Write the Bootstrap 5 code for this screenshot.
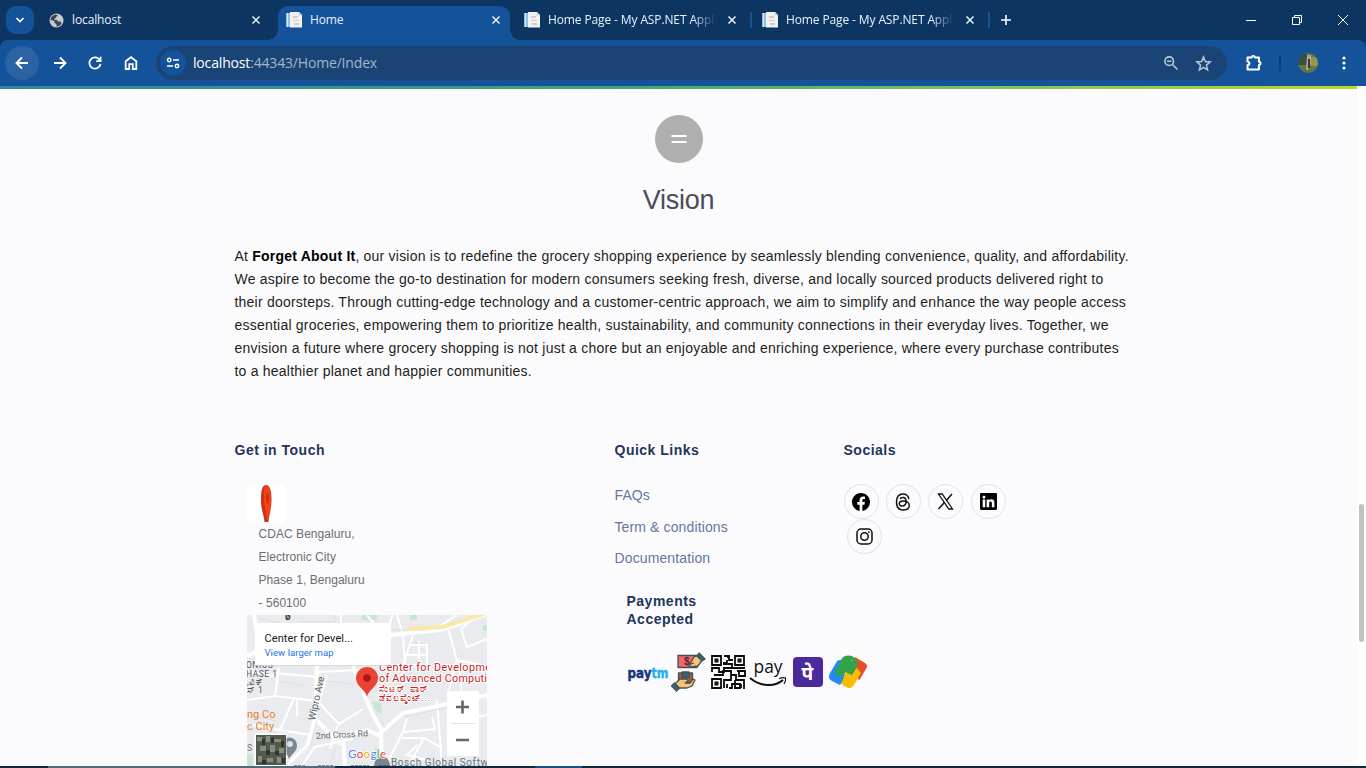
<!DOCTYPE html>
<html lang="en">
<head>
<meta charset="utf-8">
<meta name="viewport" content="width=device-width, initial-scale=1">
<title>Home</title>
<link rel="stylesheet" href="https://cdn.jsdelivr.net/npm/bootstrap@5.3.0/dist/css/bootstrap.min.css">
<style>
body{width:1366px;height:768px;font-family:"Liberation Sans",Arial,sans-serif;background:#fbfbfd;color:#212529}
svg{display:block;flex:none}
.tabstrip{height:40px;background:#0c3561;font:12px/16px "Open Sans","Noto Sans",sans-serif;letter-spacing:-.12px;color:#e9f2fc}
.tabmenu{width:28px;height:28px;margin:6px 0 0 6px;border-radius:10px;background:#14529a}
.tab-item{height:34px;margin-top:6px;width:238px;padding:0 14px 6px 10px}
.tab-item.wide{width:238px}
.tab-current{width:232px;padding-left:8px;padding-right:9px;background:#14529a;border-radius:10px 10px 0 0;position:relative}
.tab-current::before,.tab-current::after{content:"";position:absolute;bottom:0;width:10px;height:10px}
.tab-current::before{left:-10px;background:radial-gradient(circle at 0 0,transparent 9.5px,#14529a 10px)}
.tab-current::after{right:-10px;background:radial-gradient(circle at 100% 0,transparent 9.5px,#14529a 10px)}
.tab-name{flex:1;white-space:nowrap;overflow:hidden}
.tab-fade{-webkit-mask-image:linear-gradient(90deg,#000 145px,transparent 168px);mask-image:linear-gradient(90deg,#000 145px,transparent 168px)}
.tab-sep{width:2px;height:16px;margin-top:12px;background:#14529a}
.toolbar{height:46px;background:#14529a;border-radius:8px 8px 0 0;padding-left:5px}
.toolwrap{background:#0c3561}
.round-btn{width:34px;height:34px}
.round-btn.lit{background:#2b62a4;border-radius:50%}
.omnibox{width:1071px;height:34px;border-radius:17px;background:#194475;font:14px/20px "Open Sans","Noto Sans",sans-serif;letter-spacing:-.17px;color:#a3b6ca;padding:0 15px 0 4px}
.siteinfo{width:26px;height:26px;border-radius:50%;background:#14529a}
.avatar{width:20px;height:20px;border-radius:50%;overflow:hidden}
.viewport-row{height:680px}
.page{width:1357px;overflow:hidden}
.rainbow{height:3px;background:linear-gradient(90deg,#2a8a9e,#3ba678 45%,#86c35a 75%,#b8d829)}
.equals{width:48px;height:48px;margin-top:26px;border-radius:50%;background:#afafb0}
.heading{font-size:27px;line-height:32px;font-weight:400;color:#4a4c5c;margin:21px 0 0;letter-spacing:-.25px}
.vision{width:900px;margin:29px 0 0 234.5px;font-size:14px;line-height:23px;color:#1e1e20;letter-spacing:.22px;white-space:nowrap}
.vision b{color:#000}
.vision span{display:block}
.foot{display:grid;grid-template-columns:380px 229px 180px;margin:58px 0 0 234.5px}
.foot h5{font-size:14px;line-height:18px;font-weight:700;color:#23355a;letter-spacing:.5px;margin:0}
.locicon{width:38px;height:38px;margin:26px 0 0 12px;background:#fff}
.addr{font-size:12px;line-height:23px;color:#6c6d72;margin:0 0 0 24px;letter-spacing:.05px}
.mapbox{margin:0 0 0 12.5px;width:240px;height:152px}
.links a{display:block;font-size:14px;line-height:18px;color:#67779d;text-decoration:none;letter-spacing:.12px;margin-bottom:13.5px}
.links{margin-top:27px}
.pay{margin:25px 0 0 12px}
.socials{width:180px;margin-top:25px;display:flex;flex-wrap:wrap;gap:0 7.4px}
.social{width:35px;height:35px;border:1px solid #e0e1ea;border-radius:50%}
.scroller{width:9px;background:#fff;padding:417px 0 0 2px;margin-top:1px}
.thumb{width:5px;height:138px;border-radius:3px;background:#c1c1c1}
.taskbar{height:2px;background:linear-gradient(90deg,#10283f 48px,#54697c 48px,#54697c 335px,#10283f 335px,#10283f 535px,#185087 535px,#185087 582px,#10283f 582px)}
</style>
</head>
<body class="overflow-hidden">
<svg width="0" height="0" style="position:absolute" aria-hidden="true">
<defs>
<symbol id="x" viewBox="0 0 10 10"><path d="M1.5 1.5l7 7M8.5 1.5l-7 7" stroke="#e9f2fc" stroke-width="1.5"/></symbol>
<symbol id="doc" viewBox="0 0 16 16"><path d="M0 1h5v14H0z" fill="#8fc0df"/><path d="M1.5 1v14" stroke="#d5e9f6"/><path d="M4 0h9l3 3v12.500H4z" fill="#f4f2f0"/><path d="M7 4h5v2H7zM7 8h6v1H7zM8 11h5v2H8z" fill="#cfcdd0"/><path d="M12.500 0v3.500H16" fill="#d8d8da"/></symbol>
</defs>
</svg>

<header>
  <div class="tabstrip d-flex">
    <div class="tabmenu d-flex align-items-center justify-content-center"><svg width="10" height="8" viewBox="0 0 10 8"><path d="M1.500 2l3.500 3.500L8.500 2" fill="none" stroke="#fff" stroke-width="1.700"/></svg></div>
    <div class="tab-item d-flex align-items-center" style="width:244px;padding-left:15px;padding-right:17px">
      <svg class="me-2" width="15" height="15" viewBox="0 0 15 15"><circle cx="7.500" cy="7.500" r="7" fill="#c9cbce"/><path d="M7 1.500C3 2 1.500 5 1.500 7l4 1v2l2 1v2.500c2 0 4-1 5-3l-1-2H8.500V7h-3V5.500h2V4l2-1z" fill="#394554"/><path d="M9 3l-1.500 2h2l1 2 2.500.5" stroke="#c9cbce" fill="none" stroke-width="1.500"/></svg>
      <div class="tab-name">localhost</div><svg width="10" height="10"><use href="#x"/></svg>
    </div>
    <div class="tab-item tab-current d-flex align-items-center">
      <svg width="16" height="16" class="me-2"><use href="#doc"/></svg><div class="tab-name">Home</div><svg width="10" height="10"><use href="#x"/></svg>
    </div>
    <div class="tab-item d-flex align-items-center" style="width:240px;padding-left:14px;padding-right:13px">
      <svg width="16" height="16" class="me-2"><use href="#doc"/></svg><div class="tab-name tab-fade">Home Page - My ASP.NET Application</div><svg class="ms-2" width="10" height="10"><use href="#x"/></svg>
    </div>
    <div class="tab-sep"></div>
    <div class="tab-item d-flex align-items-center" style="width:236px;padding-left:10px;padding-right:13px">
      <svg width="16" height="16" class="me-2"><use href="#doc"/></svg><div class="tab-name tab-fade">Home Page - My ASP.NET Application</div><svg class="ms-2" width="10" height="10"><use href="#x"/></svg>
    </div>
    <div class="tab-sep"></div>
    <svg width="12" height="12" style="margin:14px 0 0 10px"><path d="M6 1v10M1 6h10" stroke="#fff" stroke-width="1.600"/></svg>
    <svg class="ms-auto" width="120" height="40" viewBox="1246 0 120 40" fill="none" stroke="#fff"><path d="M1246 20.500h10M1292.500 17.500h7v7h-7zM1294.500 17.500v-2h7v7h-2M1338 15l10 10M1348 15l-10 10"/></svg>
  </div>
  <div class="toolwrap">
  <div class="toolbar d-flex align-items-center">
    <div class="round-btn lit d-flex align-items-center justify-content-center"><svg width="16" height="16" viewBox="0 0 16 16" fill="none" stroke="#fff" stroke-width="1.900"><path d="M14 8H3M8 2.500L2.500 8 8 13.500"/></svg></div>
    <div class="round-btn d-flex align-items-center justify-content-center ms-1" style="margin-right:1px"><svg width="16" height="16" viewBox="0 0 16 16" fill="none" stroke="#fff" stroke-width="1.900"><path d="M2 8h11M8 2.500L13.500 8 8 13.500"/></svg></div>
    <div class="round-btn d-flex align-items-center justify-content-center" style="margin-right:2px"><svg width="16" height="16" viewBox="0 0 16 16" fill="none" stroke="#fff" stroke-width="1.800"><path d="M13 5.500A5.600 5.600 0 1 0 13.500 9M13.600 1.800v4.400H9.200"/></svg></div>
    <div class="round-btn d-flex align-items-center justify-content-center"><svg width="16" height="16" viewBox="0 0 16 16" fill="none" stroke="#fff" stroke-width="1.800"><path d="M2.700 14V6.300L8 2.200l5.300 4.100V14H9.800V9.200H6.200V14z"/></svg></div>
    <div class="omnibox d-flex align-items-center ms-2 mt-0" style="margin-right:17px">
      <div class="siteinfo d-flex align-items-center justify-content-center"><svg width="14" height="12" viewBox="0 0 14 12" fill="none" stroke="#fff" stroke-width="1.500"><circle cx="3.200" cy="3" r="1.700"/><path d="M7 3h6M1 9h6"/><circle cx="11" cy="9" r="1.700"/></svg></div>
      <div class="flex-grow-1" style="padding-left:7px"><span class="text-white">localhost</span>:44343/Home/Index</div>
      <svg width="16" height="16" viewBox="0 0 16 16" fill="none" stroke="#b9c8d9" stroke-width="1.600"><circle cx="6.200" cy="6.200" r="4.300"/><path d="M9.500 9.500l5 5M4 6.200h4.400"/></svg>
      <svg style="margin-left:16px" width="17" height="17" viewBox="0 0 17 17" fill="none" stroke="#b9c8d9" stroke-width="1.500"><path d="M8.500 2l1.800 4.500 4.900.4-3.700 3.200 1.100 4.800-4.100-2.600-4.100 2.600 1.100-4.800-3.700-3.200 4.900-.4z"/></svg>
    </div>
    <svg width="20" height="20" viewBox="0 0 20 20" fill="none" stroke="#fff" stroke-width="2"><path d="M3.500 4.500h4.200a1.500 1.500 0 0 1 3.200 0h4v4.300a1.500 1.500 0 0 1 0 3.200v4.500H3.500v-4.200c2.600-.6 2.600-3.300 0-3.900z" stroke-linejoin="round"/></svg>
    <div style="width:2px;height:16px;background:#0e3c70;margin:0 17px 0 15px"></div>
    <div class="avatar"><svg width="20" height="20"><path fill="#667746" d="M0 0h20v20H0z"/><path fill="#374f46" d="M0 0h9v12H0z"/><path fill="#92954a" d="M13 4h7v9h-7z"/><path fill="#a8aa91" d="M9 2h4v9l-3 6H8z"/><path fill="#4b3035" d="M10 6h2v9h-2z"/></svg></div>
    <svg style="margin-left:24px" width="4" height="16" fill="#fff"><circle cx="2" cy="3" r="1.600"/><circle cx="2" cy="8" r="1.600"/><circle cx="2" cy="13" r="1.600"/></svg>
  </div>
  </div>
</header>

<div class="viewport-row d-flex">
<main class="page">
  <div class="rainbow"></div>
  <section class="d-flex flex-column align-items-center text-center">
    <div class="equals d-flex align-items-center justify-content-center"><svg width="16" height="10"><path d="M.5 2h15M.5 8h15" stroke="#fff" stroke-width="2"/></svg></div>
    <h2 class="heading">Vision</h2>
  </section>
  <p class="vision"><span>At <b>Forget About It</b>, our vision is to redefine the grocery shopping experience by seamlessly blending convenience, quality, and affordability.</span><span>We aspire to become the go-to destination for modern consumers seeking fresh, diverse, and locally sourced products delivered right to</span><span>their doorsteps. Through cutting-edge technology and a customer-centric approach, we aim to simplify and enhance the way people access</span><span>essential groceries, empowering them to prioritize health, sustainability, and community connections in their everyday lives. Together, we</span><span>envision a future where grocery shopping is not just a chore but an enjoyable and enriching experience, where every purchase contributes</span><span>to a healthier planet and happier communities.</span></p>

  <footer class="foot">
    <div>
      <h5>Get in Touch</h5>
      <div class="locicon"><svg width="38" height="38"><path d="M19 0c4 0 5.500 6 5.500 14 0 10-2.500 16-3 23h-4c-.5-7-3.500-12-3.500-22C14 5 15.500 0 19 0z" fill="#c9301f"/><path d="M19 1c3.500 0 5 6 5 13s-2 14-3 21h-1c0-8-3-12-3-21 0-7 0-13 2-13z" fill="#fb4210"/><ellipse cx="20.500" cy="13" rx="1.600" ry="5.500" fill="#c5331a"/></svg></div>
      <p class="addr">CDAC Bengaluru,<br>Electronic City<br>Phase 1, Bengaluru<br>- 560100</p>
      <div class="mapbox">
      <svg width="240" height="152" viewBox="0 0 240 152" font-family="Roboto,sans-serif" overflow="hidden">
        <path fill="#e9ebee" d="M0 0h240v152H0z"/>
        <path fill="#c8e6d2" d="M115 0h16l-2 5h-15zM163 0h7v5h-7zM236 10h4v6h-4zM125 86l9 2 1 11-6-3zM128 132l8 3-2 12-7-4zM0 139l6 0v13H0z"/>
        <g fill="none" stroke="#fff" stroke-width="2">
          <path stroke-width="4" d="M7 0l5 35-12 6M70 51l-2 53-8 28-22 20M106 51l18 45 10 18 1 38M118 114l13 6 25-22 30-6 54-12M144 20l50-5 46-16M68 104l26 25M98 152l-2-32 22-4"/>
          <path d="M94 0v9M120 0l15 20 5 30M140 20l5-20M150 0l6 20 2 30M166 20l-10 30 24 0 0-23M162 30h18M160 40h20M172 26v24M185 16l25-16M200 10l10 35 30 6M210 45l-8 30M230 0l-16 14 6 18 20-8M32 53l-4 28-28 4M28 58l42 4M25 81l22 2-14 32-33-6M47 83l21 3M70 57l42-2M80 60l-8 28 20 21 24-15M91 110l-8 24M33 115l30 5M54 152l14-20 38-8M160 103l-4 14 32-3-3-12M190 85l5 67M156 117l-16 31M155 123l22 0-14 25M177 123l18 10M170 130l-10 10 20 5M215 80l-3-33M240 100l-30 6M50 83v18M5 57l24 4"/>
        </g>
        <g fill="none" stroke="#d8dbdf" stroke-width=".8"><path d="M12 3l25 6 12 12M52 7h36M88 0v9M70 105l-6 24-21 21M126 93l12 20M158 102l30-7 28-5M33 66l26 5M8 101l22 5M80 66l25 3M142 15l38 0M164 28h18M84 147l5-16"/></g>
        <path d="M160 14l36-2 44-14" fill="none" stroke="#f8e9a4" stroke-width="4"/>
        <text x="38" y="5" font-size="10" font-weight="700" fill="#3c4043">ø</text>
        <g fill="#55585c" font-size="8.500" letter-spacing=".5"><text x="-1" y="53">ONICS</text><text x="-1" y="62">HASE 1</text><text x="0" y="70">,ವಿಕ್</text><text x="0" y="78">ಸ್ 1</text></g>
        <g fill="#e5842a" font-size="11"><text x="0" y="103">ng Co</text><text x="0" y="115">c City</text></g>
        <text transform="translate(68 106) rotate(-78)" font-size="10" fill="#5d6166">Wipro Ave</text>
        <text transform="translate(69 124) rotate(-3)" font-size="8.800" fill="#686c70">2nd Cross Rd</text>
        <g fill="#c5221f" font-size="10.800" stroke="#fff" stroke-width="2" paint-order="stroke"><text x="132" y="56" textLength="112">Center for Developme</text><text x="132" y="67" textLength="108">of Advanced Computi</text><text x="132" y="77" font-size="8.500" textLength="49">ಸೆಂಟರ್ ಫಾರ್</text><text x="132" y="86" font-size="8.500" textLength="51">ಡೆವಲಪ್ಮೆಂಟ್...</text></g>
        <path d="M8 8h136v43H8z" fill="#c9cacc" opacity=".5"/><path d="M8 8h136v42H8z" fill="#fff"/>
        <text x="17.500" y="27" font-size="11" fill="#17181a" textLength="88.500">Center for Devel...</text>
        <text x="17.500" y="41" font-size="9.500" fill="#1a73e8" textLength="69">View larger map</text>
        <path d="M120 82c-1-7-11-10-11-19a11 11 0 0 1 22 0c0 9-10 12-11 19z" fill="#e94335"/><circle cx="120" cy="63" r="3.800" fill="#b11313"/>
        <path d="M42 144c-1-5-7-8-7-14a7.500 7.500 0 0 1 15 0c0 7-6 9-8 14z" fill="#77868f"/><circle cx="43" cy="129" r="3" fill="#dce1e4"/>
        <text x="0" y="136" font-size="9" fill="#777">S</text>
        <path d="M7.500 118.500h32v33h-32z" fill="#fff"/><path d="M9 120h30v30H9z" fill="#54594f"/>
        <path d="M10 122h5v4h-5zM19 121h4v6h-4zM27 124h7v3h-7zM13 131h6v5h-6zM23 130h5v7h-5zM32 133h5v5h-5zM11 141h4v6h-4zM20 143h6v4h-6zM30 142h4v6h-4z" fill="#898b7c"/>
        <path d="M15 124h3v6h-3zM24 123h3v5h-3zM34 126h3v6h-3zM19 135h4v5h-4zM28 136h4v4h-4zM15 145h4v4h-4zM35 143h3v5h-3z" fill="#293731"/>
        <path d="M127 152c0-7 4-11 8-11s8 4 8 11z" fill="#77868f"/>
        <text x="101" y="143" font-size="11.500" font-family="Lato,sans-serif" stroke="#fff" stroke-width="1.500" paint-order="stroke" textLength="38"><tspan fill="#4285f4">G</tspan><tspan fill="#ea4335">o</tspan><tspan fill="#f4b400">o</tspan><tspan fill="#4285f4">g</tspan><tspan fill="#34a853">l</tspan><tspan fill="#ea4335">e</tspan></text>
        <text x="144" y="151" font-size="10" fill="#66717b" textLength="97">Bosch Global Softw</text>
        <path d="M200 76h32v65h-32z" fill="#fff"/><path d="M204 108.500h24" stroke="#e4e4e4"/><path d="M209 92h13M215.500 85.500v13M209 125h13" stroke="#666" stroke-width="2.600"/>
        <path d="M47 151h11M71 151h16M104 151h18M132 151h12" stroke="#272b2e" stroke-dasharray="3 1"/>
      </svg></div>
    </div>
    <div>
      <h5>Quick Links</h5>
      <div class="links"><a href="#">FAQs</a><a href="#">Term &amp; conditions</a><a href="#">Documentation</a></div>
      <div class="pay"><h5>Payments<br>Accepted</h5>
      <svg style="margin-top:22px" width="242" height="42" viewBox="626 650 242 42" role="img" aria-label="Payments">
        <text x="626.500" y="678" font-family="DejaVu Sans,sans-serif" font-size="14" font-weight="700" fill="#18357d" stroke="#18357d" stroke-width=".5" textLength="24" lengthAdjust="spacingAndGlyphs">pay</text><text x="650.500" y="678" font-family="DejaVu Sans,sans-serif" font-size="14" font-weight="700" fill="#26b0ea" stroke="#26b0ea" stroke-width=".5" textLength="17" lengthAdjust="spacingAndGlyphs">tm</text>
        <g stroke="#3d5359" stroke-width="1.300" stroke-linejoin="round"><path fill="#fa6368" d="M677 655.500h19v12h-19z"/><path fill="#fac276" d="M689 664l4-7 5-2 4 4-5 7-7 1-2-1 2-2 3-1"/><path fill="#3d6472" d="M696 656l2-3 6 6-3 2z"/><path fill="#ad5b2f" d="M677.500 673h14v10h-14z"/><path fill="#3d6472" d="M681 672h7v5h-7z"/><path fill="#fac276" d="M674 684l5-5 7 0 1 2-3 2h5l3-4 2 1-3 6-5 2h-8l-2 1z"/><path fill="#3d6472" d="M670.500 686l3-3 5 5-3 3z"/></g><text x="683" y="665" font-family="Liberation Sans,sans-serif" font-size="10" font-weight="700" fill="#3d3034">$</text>
        <g fill="none" stroke="#0b0b0b" stroke-width="1.800"><path d="M711 656h9v9h-9zM734 656h9v9h-9zM711 679h9v9h-9zM723 656h5v4h4M723 664h3v-4M727 664h4v4h-8v4h-5v-4h-7v4M732 668h12M736 671h8v5h-6v-5M713 675h9v-4h8v9h-7v8M730 675h5v5h8v9M734 680v8h5v-4h-8M728 688h3v-5M740 684v4M726 684v4"/></g><path fill="#111" d="M713.500 658.500h4v4h-4zM736.500 658.500h4v4h-4zM713.500 681.500h4v4h-4zM726 655h3v3h-3zM722 662h3v3h-3z"/>
        <text x="752.500" y="673" font-family="Open Sans,sans-serif" font-size="17.500" fill="#111" textLength="29" lengthAdjust="spacingAndGlyphs">pay</text><path d="M749 678c11 9 25 9 33 2" fill="none" stroke="#111" stroke-width="2"/><path d="M778 678.500c3-1 5-1.500 6.500-.5.500 2-.5 4.500-1.500 6" fill="none" stroke="#111" stroke-width="1.200"/>
        <rect x="792" y="657" width="30" height="30" rx="4" fill="#4c2a9d"/><text x="800.500" y="680" font-family="Noto Sans Devanagari,Noto Sans,sans-serif" font-size="19" font-weight="700" fill="#fff">पे</text>
        <path fill="#e94e2b" d="M854 657l10 6q3 2 1.500 5l-7 12-10-6z"/><path fill="#fabb05" d="M852 663l8 10-7 12q-3 5-8 2l-8-5z"/><path fill="#268bf1" d="M839 660l8 1-5 19-3 5-8-4q-5-3-2-8l6-10q1-3 4-3z"/><path fill="#34a14b" d="M844 656q3-1 7 0l4 3-4 1-8 14q-4 6-9-2l6-12q1-3 4-4zM847 664l6-5q5 1 3 8l-5 8-7-3z"/>
      </svg></div>
    </div>
    <div>
      <h5>Socials</h5>
      <div class="socials">
        <div class="social d-flex align-items-center justify-content-center"><svg width="18" height="18" viewBox="0 0 16 16"><path d="M16 8.049c0-4.446-3.582-8.050-8-8.050C3.580 0-.002 3.603-.002 8.050c0 4.017 2.926 7.347 6.750 7.951v-5.625h-2.030V8.050H6.750V6.275c0-2.017 1.195-3.131 3.022-3.131.876 0 1.791.157 1.791.157v1.980h-1.009c-.993 0-1.303.621-1.303 1.258v1.510h2.218l-.354 2.326H9.250V16c3.824-.604 6.750-3.934 6.750-7.951"/></svg></div>
        <div class="social d-flex align-items-center justify-content-center"><svg width="16" height="18" viewBox="0 0 16 18" fill="none" stroke="#111" stroke-width="1.500"><path d="M14 6C13 2 11 1 8 1 3.500 1 1.500 4 1.500 9s2 8 6.500 8c4 0 6.300-2 6.300-4.500 0-3-3-4.500-6-4.500-2.600 0-4 1-4 2.600 0 3.500 6.800 3.500 6.800-2.100C11.100 5.500 9.800 4.500 8 4.500c-1.500 0-2.500.5-3 1.500"/></svg></div>
        <div class="social d-flex align-items-center justify-content-center"><svg width="17" height="17" viewBox="0 0 17 17" fill="none" stroke="#111"><path d="M1.500 1h3.700L15.500 16h-3.700z" stroke-width="1.300"/><path d="M15 1L9.300 7.400M7.400 9.600L1.500 16" stroke-width="1.500"/></svg></div>
        <div class="social d-flex align-items-center justify-content-center"><svg width="17" height="17" viewBox="0 0 16 16"><path d="M0 1.146C0 .513.526 0 1.175 0h13.650C15.474 0 16 .513 16 1.146v13.708c0 .633-.526 1.146-1.175 1.146H1.175C.526 16 0 15.487 0 14.854zm4.943 12.248V6.169H2.542v7.225zm-1.200-8.212c.837 0 1.358-.554 1.358-1.248-.015-.709-.520-1.248-1.342-1.248S2.400 3.226 2.400 3.934c0 .694.521 1.248 1.327 1.248zm4.908 8.212V9.359c0-.216.016-.432.080-.586.173-.431.568-.878 1.232-.878.869 0 1.216.662 1.216 1.634v3.865h2.401V9.250c0-2.220-1.184-3.252-2.764-3.252-1.274 0-1.845.700-2.165 1.193v.025h-.016l.016-.025V6.169h-2.400c.030.678 0 7.225 0 7.225z"/></svg></div>
        <div class="social d-flex align-items-center justify-content-center" style="margin-left:3px"><svg width="17" height="17" viewBox="0 0 17 17" fill="none" stroke="#111" stroke-width="1.500"><rect x="1" y="1" width="15" height="15" rx="4"/><circle cx="8.500" cy="8.500" r="3.700"/><circle cx="12.900" cy="4.100" r=".9" fill="#111" stroke="none"/></svg></div>
      </div>
    </div>
  </footer>
</main>
<div class="scroller"><div class="thumb"></div></div>
</div>
<div class="taskbar"></div>
<script src="https://cdn.jsdelivr.net/npm/bootstrap@5.3.0/dist/js/bootstrap.bundle.min.js"></script>
</body>
</html>
